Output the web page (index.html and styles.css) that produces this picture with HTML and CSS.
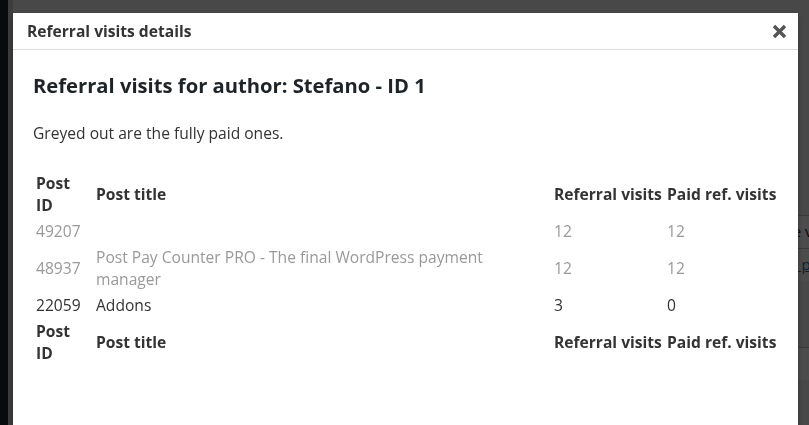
FILE: index.html
```html
<!doctype html>
<html>
<head>
  <title>Referral visits details</title>
  <meta charset="utf-8">
  <link rel="stylesheet" href="styles.css">
</head>
<body>
  <div class="page">
    <div class="adminmenu"></div>
    <div class="pagebody">
      <div class="bgrow bgrow-first"><span class="bgtext">Date ve</span></div>
      <div class="bgrow"><a class="bglink" href="#">Stefano pe</a></div>
      <div class="bgrow bgrow-last"></div>
    </div>
  </div>
  <div class="overlay"></div>

  <div class="modal">
    <div class="modal-header">
      <span class="modal-title">Referral visits details</span>
      <a class="modal-close" href="#" title="Close">
        <svg width="15" height="15" viewBox="0 0 15 15">
          <path d="M2 2 L13 13 M13 2 L2 13" stroke="#555" stroke-width="3.4" stroke-linecap="butt"/>
        </svg>
      </a>
    </div>
    <div class="modal-content">
      <h2>Referral visits for author: Stefano - ID 1</h2>
      <p>Greyed out are the fully paid ones.</p>
      <table class="visits">
        <colgroup>
          <col class="c-id">
          <col class="c-title">
          <col class="c-ref">
          <col class="c-paid">
        </colgroup>
        <thead>
          <tr>
            <th class="h-id">Post ID</th>
            <th>Post title</th>
            <th>Referral visits</th>
            <th>Paid ref. visits</th>
          </tr>
        </thead>
        <tbody>
          <tr class="paid">
            <td>49207</td>
            <td class="title"></td>
            <td>12</td>
            <td>12</td>
          </tr>
          <tr class="paid">
            <td>48937</td>
            <td class="title">Post Pay Counter PRO - The final WordPress payment manager</td>
            <td>12</td>
            <td>12</td>
          </tr>
          <tr>
            <td>22059</td>
            <td class="title">Addons</td>
            <td>3</td>
            <td>0</td>
          </tr>
        </tbody>
        <tfoot>
          <tr>
            <th class="h-id">Post ID</th>
            <th>Post title</th>
            <th>Referral visits</th>
            <th>Paid ref. visits</th>
          </tr>
        </tfoot>
      </table>
    </div>
  </div>
</body>
</html>
```

FILE: styles.css
```css
body{
  margin: 0;
  height: 425px;
  overflow: hidden;
  background-color: #f0f0f1;
  font-family: "Open Sans", "Noto Sans", sans-serif;
}
.page{
  display: flex;
  height: 100%;
}
.adminmenu{
  width: 8px;
  background-color: #1d2327;
}
.pagebody{
  flex: 1;
  padding-top: 215px;
  border-left: 5px solid #ccc;
}
.bgrow{
  height: 32px;
  border-top: 1px solid #c3c4c7;
  background-color: #fff;
  font-size: 15px;
  line-height: 30px;
  text-align: right;
  white-space: nowrap;
  overflow: hidden;
}
.bgrow-first .bgtext{
  color: #1d2327;
  margin-right: -12px;
}
.bglink{
  color: #2271b1;
  margin-right: -10px;
}
.bgrow-last{
  margin-top: 66px;
}
.overlay{
  position: fixed;
  inset: 0;
  background-color: rgba(0,0,0,0.7);
}

.modal{
  position: fixed;
  left: 13px;
  top: 13px;
  width: 785px;
  height: 440px;
  background-color: #fff;
  color: #333;
  box-shadow: 0 3px 6px rgba(0,0,0,0.3);
}
.modal-header{
  display: flex;
  align-items: center;
  justify-content: space-between;
  height: 36px;
  padding: 0 11px 0 14px;
  border-bottom: 1px solid #ddd;
}
.modal-title{
  font-size: 15.6px;
  font-weight: bold;
  color: #333;
}
.modal-close{
  display: flex;
  margin-top: 1px;
}
.modal-content{
  padding: 21px 20px 20px 20px;
}
h2{
  margin: 0;
  font-size: 20.2px;
  line-height: 28px;
  color: #1d2327;
}
p{
  margin: 23px 0 25px 0;
  font-size: 15.6px;
  line-height: 22px;
  color: #333;
}
.visits{
  width: 745px;
  table-layout: fixed;
  border-spacing: 2px;
  font-size: 15.6px;
  line-height: 22px;
  color: #333;
}
.visits th, .visits td{
  padding: 1px;
  text-align: left;
  vertical-align: middle;
}
.visits th{
  font-weight: bold;
  white-space: nowrap;
}
.visits th.h-id{
  white-space: normal;
  padding-right: 12px;
}
.visits td.title{
  padding-right: 20px;
}
.c-id{ width: 58px; }
.c-ref{ width: 111px; }
.c-paid{ width: 110px; }
.visits tr.paid td{
  color: #999;
}
```
